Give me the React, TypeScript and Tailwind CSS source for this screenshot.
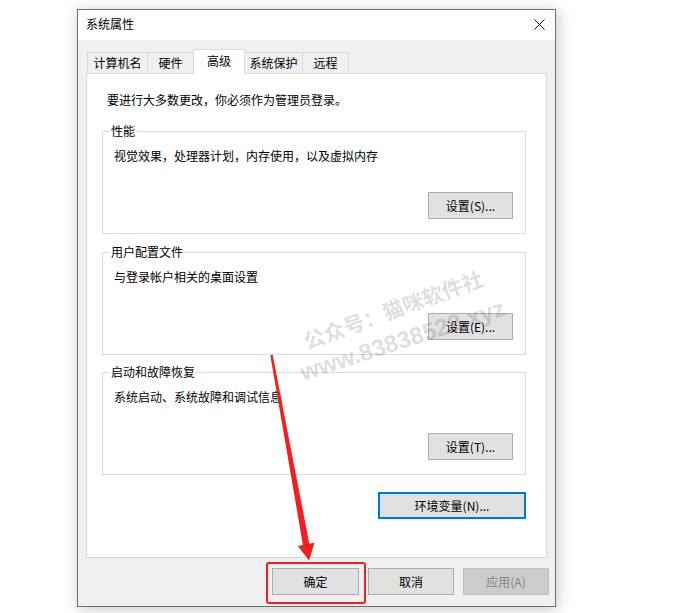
import React from 'react'

const font = { fontFamily: '"Noto Sans CJK SC", "Noto Sans", sans-serif' }

function WinButton({ label, className = '' }: { label: string; className?: string }) {
	return (
		<div
			className={`h-[27px] flex items-center justify-center bg-[#e1e1e1] border border-[#adadad] text-[12px] leading-4 text-black ${className}`}
		>
			{label}
		</div>
	)
}

function Group({ title, text, button }: { title: string; text: string; button: string }) {
	return (
		<div className='relative ml-[15px] w-[424px] h-[103px] border border-[#dcdcdc] flex flex-col'>
			<span className='absolute left-[7px] -top-[9px] bg-white px-px text-[12px] leading-4 text-black'>
				{title}
			</span>
			<p className='pl-[11px] pt-[16px] text-[12px] leading-4 text-black'>{text}</p>
			<div className='mt-auto mb-[14px] mr-[12px] self-end'>
				<WinButton label={button} className='w-[85px]' />
			</div>
		</div>
	)
}

export default function App() {
	const tabs = ['计算机名', '硬件', '高级', '系统保护', '远程']
	const widths = ['w-[61px]', 'w-[47px]', 'w-[52px]', 'w-[59px]', 'w-[47px]']

	return (
		<div className='relative w-[680px] h-[613px] bg-white overflow-hidden' style={font}>
			{/* dialog window */}
			<div className='ml-[77px] mt-[9px] w-[479px] h-[598px] border border-[#6f6f6f] bg-[#f0f0f0] shadow-[2px_2px_14px_rgba(0,0,0,0.22)] flex flex-col'>
				{/* title bar */}
				<div className='h-[30px] bg-white flex items-center justify-between pl-[8px] pr-[10px]'>
					<span className='text-[12px] leading-4 text-black -mt-[2px]'>系统属性</span>
					<svg width='11' height='11' viewBox='0 0 11 11' className='-mt-[2px]'>
						<path d='M0.5 0.5 L10.5 10.5 M10.5 0.5 L0.5 10.5' stroke='#111' strokeWidth='1' />
					</svg>
				</div>

				<div className='flex-1 px-[8px] pt-[9px] flex flex-col'>
					{/* tabs */}
					<div className='h-[24px] flex items-end pl-px'>
						{tabs.map((t, i) =>
							t === '高级' ? (
								<div
									key={t}
									className={`${widths[i]} -ml-px h-[25px] -mb-px relative z-10 bg-white border border-b-0 border-[#d9d9d9] flex items-start justify-center pt-[3px] text-[12px] leading-4 text-black`}
								>
									{t}
								</div>
							) : (
								<div
									key={t}
									className={`${widths[i]} ${i === 0 ? '' : '-ml-px'} h-[21px] bg-[#f0f0f0] border border-b-0 border-[#d9d9d9] flex items-start justify-center pt-[2px] text-[12px] leading-4 text-black`}
								>
									{t}
								</div>
							)
						)}
					</div>

					{/* tab panel */}
					<div className='h-[485px] w-[461px] border border-[#d9d9d9] bg-white flex flex-col'>
						<p className='mt-[18px] pl-[20px] text-[12px] leading-4 text-black'>
							要进行大多数更改，你必须作为管理员登录。
						</p>
						<div className='mt-[23px]'>
							<Group title='性能' text='视觉效果，处理器计划，内存使用，以及虚拟内存' button='设置(S)...' />
						</div>
						<div className='mt-[18px]'>
							<Group title='用户配置文件' text='与登录帐户相关的桌面设置' button='设置(E)...' />
						</div>
						<div className='mt-[17px]'>
							<Group title='启动和故障恢复' text='系统启动、系统故障和调试信息' button='设置(T)...' />
						</div>
						<div className='mt-[17px] self-end mr-[20px] w-[148px] h-[27px] flex items-center justify-center bg-[#e1e1e1] border-2 border-[#0078d7] text-[12px] leading-4 text-black'>
							环境变量(N)...
						</div>
					</div>

					{/* bottom buttons */}
					<div className='pt-[10px] flex justify-end gap-[9px] -mr-[2px]'>
						<div className='relative'>
							<WinButton label='确定' className='w-[87px]' />
							<div className='absolute -left-[6px] -top-[6px] w-[100px] h-[42px] border-2 border-[#f41e1e] rounded-[3px]' />
						</div>
						<WinButton label='取消' className='w-[86px]' />
						<div className='w-[86px] h-[27px] flex items-center justify-center bg-[#cccccc] border border-[#bfbfbf] text-[12px] leading-4 text-[#838383]'>
							应用(A)
						</div>
					</div>
				</div>
			</div>

			{/* watermark */}
			<div className='absolute left-[300px] top-[330px] origin-top-left -rotate-[20deg] text-[21px] leading-6 font-bold text-black/15 whitespace-nowrap pointer-events-none'>
				公众号：猫咪软件社
			</div>
			<div
				className='absolute left-[297px] top-[362px] origin-top-left -rotate-[18deg] text-[24px] leading-6 font-bold text-black/15 whitespace-nowrap pointer-events-none'
				style={{ fontFamily: '"Liberation Sans", Arial, sans-serif' }}
			>
				www.83838522.xyz
			</div>

			{/* red arrow */}
			<svg className='absolute left-0 top-0 pointer-events-none' width='680' height='613' viewBox='0 0 680 613'>
				<polygon
					points='270.3,355.2 272.7,354.8 309.3,543.8 314.5,542.6 309,560.5 297.8,546 302.9,544.9'
					fill='#f41e1e'
				/>
			</svg>
		</div>
	)
}
